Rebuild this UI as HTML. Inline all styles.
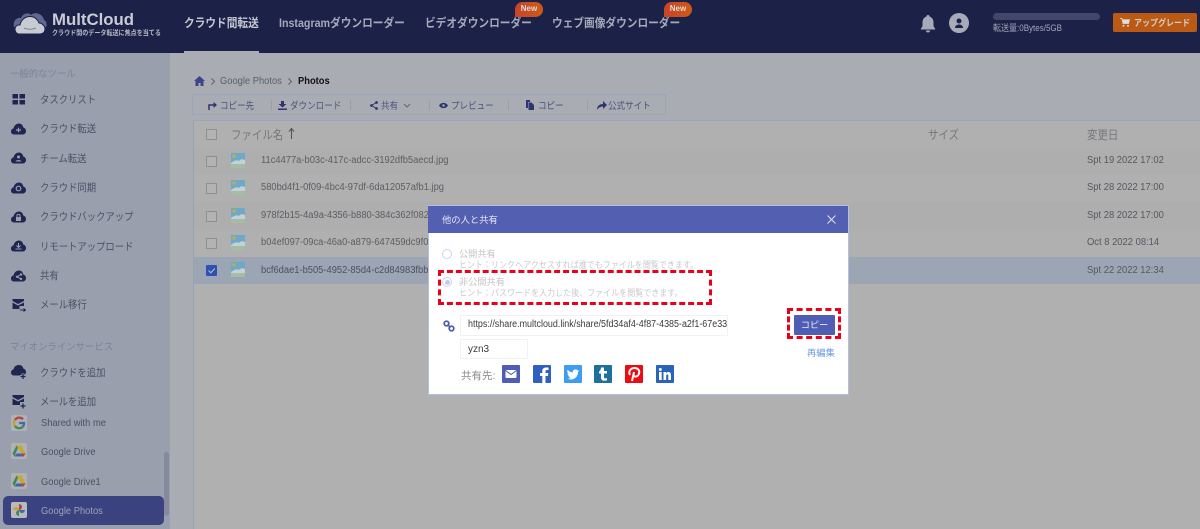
<!DOCTYPE html>
<html><head><meta charset="utf-8">
<style>
html,body{margin:0;padding:0;width:1200px;height:529px;overflow:hidden;background:#a9acb2}
#w{position:absolute;left:0;top:0;width:1200px;height:529px;overflow:hidden;filter:blur(.35px)}
body{position:relative;font-family:"Liberation Sans","Noto Sans CJK JP",sans-serif;font-size:11px;color:#5d6270}
.a{position:absolute;white-space:nowrap}
svg{display:block;overflow:visible}
.sx{transform:scaleX(.89);transform-origin:0 50%}
.nav{font-size:12px;font-weight:bold;color:#a5a9b8;top:14px;line-height:18px}
.side{color:#4b5064;font-size:10.5px;left:40px;transform:scaleX(.89);transform-origin:0 50%}
.ic{position:absolute;left:11px}
.cb{position:absolute;left:206px;width:9px;height:9px;border:1px solid #8f8f8f;background:#b3b3b3}
.thumb{position:absolute;left:231px;width:14px;height:15px}
.fn{position:absolute;left:261px;color:#5c5e64;font-size:10px;white-space:nowrap;transform:scaleX(.935);transform-origin:0 50%}
.dt{position:absolute;left:1087px;color:#55585f;font-size:10px;white-space:nowrap;transform:scaleX(.94);transform-origin:0 50%}
.tb{position:absolute;top:98px;color:#4a5080;font-size:9.5px;white-space:nowrap;transform:scaleX(.9);transform-origin:0 50%}
.sep{position:absolute;top:100px;width:1px;height:10px;background:#979daf}
.new{position:absolute;top:2px;width:28px;height:15px;background:linear-gradient(90deg,#c8432a,#cf5a14);border-radius:9px 9px 9px 0;color:#ddd;font-size:8px;font-weight:bold;text-align:center;line-height:14px}
.soc{position:absolute;top:365px;width:18px;height:18px;border-radius:1px}
.hd{font-size:12px;color:#75777d;top:126px;transform:scaleX(.87);transform-origin:0 50%}
.hint{left:459px;font-size:9px;color:#c9c9c9;transform:scaleX(.89);transform-origin:0 50%}
.rd{left:459px;font-size:9.2px;color:#c4c4c4}
</style></head><body><div id="w">

<!-- header -->
<div class="a" style="left:0;top:0;width:1200px;height:53px;background:#1c2148"></div>
<svg class="a" style="left:13px;top:12px" width="34" height="23" viewBox="0 0 34 23"><path d="M1 15C-.5 9 4 5 8 6 10 1 16 0 18 3 22-1 30 2 31 8 34 9 34 14 33 15Z" fill="#5f6690"/><path d="M6 22C2.500 22 2 18 2 17 2 14 5 12.500 7 13 8 8 12 4.500 17 4.500 22 4.500 25 8 26 11 29 11 32 14 32 17 32 20 30 22 27 22Z" fill="#c8cbd3" stroke="#1c2148" stroke-width="1"/><path d="M11 16Q17 18.500 23 16" stroke="#777" fill="none" stroke-width=".8"/></svg>
<div class="a" style="left:52px;top:10px;font-size:16.800px;font-weight:bold;color:#c9ccd3">MultCloud</div>
<div class="a sx" style="left:52px;top:27px;font-size:6.800px;color:#b6b9c5;font-weight:bold">クラウド間のデータ転送に焦点を当てる</div>
<div class="a nav sx" style="left:184px;color:#c3c6cf">クラウド間転送</div>
<div class="a" style="left:184px;top:51px;width:75px;height:2px;background:#a9acb2"></div>
<div class="a nav sx" style="left:279px">Instagramダウンローダー</div>
<div class="a nav sx" style="left:425px">ビデオダウンローダー</div>
<div class="a nav sx" style="left:552px">ウェブ画像ダウンローダー</div>
<div class="new" style="left:515px">New</div>
<div class="new" style="left:664px">New</div>
<svg class="a" style="left:920px;top:15px" width="16" height="18" viewBox="0 0 16 18"><path d="M8 0C9 0 9.500 .6 9.500 1.500 12 2.300 13.500 4.500 13.500 7.500L13.500 11 15.500 14.500.5 14.500 2.500 11 2.500 7.500C2.500 4.500 4 2.300 6.500 1.500 6.500.6 7 0 8 0Z M5.800 15.500H10.200C10 17 9 17.500 8 17.500 7 17.500 6 17 5.800 15.500Z" fill="#a7abb9"/></svg>
<svg class="a" style="left:949px;top:13px" width="20" height="20" viewBox="0 0 20 20"><circle cx="10" cy="10" r="10" fill="#a7abb9"/><circle cx="10" cy="8" r="2.500" fill="#1c2148"/><path d="M6 15C6 12.500 8 11.500 10 11.500 12 11.500 14 12.500 14 15Z" fill="#1c2148"/></svg>
<div class="a" style="left:993px;top:13px;width:107px;height:7px;border-radius:4px;background:#41466a"></div>
<div class="a sx" style="left:993px;top:21px;font-size:9px;color:#a3a7b6">転送量:0Bytes/5GB</div>
<div class="a" style="left:1113px;top:13px;width:84px;height:19px;border-radius:2px;background:#bb5a14"></div>
<svg class="a" style="left:1120px;top:18px" width="10" height="9" viewBox="0 0 10 9"><path d="M0 .5H2L3 5.500H8.500L9.500 1.800H2.500" stroke="#ddd" fill="#ddd" stroke-width=".8"/><circle cx="3.500" cy="7.800" r="1" fill="#ddd"/><circle cx="8" cy="7.800" r="1" fill="#ddd"/></svg>
<div class="a sx" style="left:1134px;top:16px;font-size:9px;font-weight:bold;color:#d5cfc8">アップグレード</div>

<!-- sidebar -->
<div class="a" style="left:0;top:53px;width:170px;height:476px;background:#9a9fae"></div>
<div class="a" style="left:10px;top:66px;font-size:9.400px;color:#7c8299">一般的なツール</div>
<svg class="ic" style="top:94px" width="15" height="11" viewBox="0 0 15 11" fill="#1f2650"><rect x="1.500" width="5.500" height="4.500"/><rect x="8.500" width="5.500" height="4.500"/><rect x="1.500" y="6" width="5.500" height="4.500"/><rect x="8.500" y="6" width="5.500" height="4.500"/></svg>
<div class="a side" style="top:92px">タスクリスト</div>
<svg class="ic" style="top:123px" width="15" height="12" viewBox="0 0 15 12"><path d="M3 11.500C1 11.500 0 10 0 8.500 0 7 1 5.500 2.500 5.500 3 2.500 5.500 .5 8 .5 10.500.5 12 2.500 12.300 4.500 14 5 15 6.500 15 8 15 10 13.500 11.500 12 11.500Z" fill="#1f2650"/><path d="M5 7H10M7.500 4.700V9.300" stroke="#9a9fae" stroke-width="1.300"/></svg>
<div class="a side" style="top:121px">クラウド転送</div>
<svg class="ic" style="top:152px" width="15" height="12" viewBox="0 0 15 12"><path d="M3 11.500C1 11.500 0 10 0 8.500 0 7 1 5.500 2.500 5.500 3 2.500 5.500 .5 8 .5 10.500.5 12 2.500 12.300 4.500 14 5 15 6.500 15 8 15 10 13.500 11.500 12 11.500Z" fill="#1f2650"/><circle cx="7.500" cy="5" r="1.500" fill="#9a9fae"/><path d="M4.500 9.500C5 7.500 10 7.500 10.500 9.500Z" fill="#9a9fae"/></svg>
<div class="a side" style="top:151px">チーム転送</div>
<svg class="ic" style="top:182px" width="15" height="12" viewBox="0 0 15 12"><path d="M3 11.500C1 11.500 0 10 0 8.500 0 7 1 5.500 2.500 5.500 3 2.500 5.500 .5 8 .5 10.500.5 12 2.500 12.300 4.500 14 5 15 6.500 15 8 15 10 13.500 11.500 12 11.500Z" fill="#1f2650"/><circle cx="7.500" cy="6.500" r="2.300" fill="none" stroke="#9a9fae" stroke-width="1.200"/></svg>
<div class="a side" style="top:180px">クラウド同期</div>
<svg class="ic" style="top:211px" width="15" height="12" viewBox="0 0 15 12"><path d="M3 11.500C1 11.500 0 10 0 8.500 0 7 1 5.500 2.500 5.500 3 2.500 5.500 .5 8 .5 10.500.5 12 2.500 12.300 4.500 14 5 15 6.500 15 8 15 10 13.500 11.500 12 11.500Z" fill="#1f2650"/><rect x="5" y="6" width="5" height="4" fill="#9a9fae"/><path d="M6 6V4.500C6 3 9 3 9 4.500V6" stroke="#9a9fae" fill="none"/></svg>
<div class="a side" style="top:209px">クラウドバックアップ</div>
<svg class="ic" style="top:240px" width="15" height="12" viewBox="0 0 15 12"><path d="M3 11.500C1 11.500 0 10 0 8.500 0 7 1 5.500 2.500 5.500 3 2.500 5.500 .5 8 .5 10.500.5 12 2.500 12.300 4.500 14 5 15 6.500 15 8 15 10 13.500 11.500 12 11.500Z" fill="#1f2650"/><path d="M7.500 3V7M5.500 5.500L7.500 7.500 9.500 5.500M4.500 9H10.500" stroke="#9a9fae" stroke-width="1.100" fill="none"/></svg>
<div class="a side" style="top:239px">リモートアップロード</div>
<svg class="ic" style="top:270px" width="15" height="12" viewBox="0 0 15 12"><path d="M3 11.500C1 11.500 0 10 0 8.500 0 7 1 5.500 2.500 5.500 3 2.500 5.500 .5 8 .5 10.500.5 12 2.500 12.300 4.500 14 5 15 6.500 15 8 15 10 13.500 11.500 12 11.500Z" fill="#1f2650"/><path d="M10 4.500L6 6.800 10 9" stroke="#9a9fae" fill="none"/><circle cx="10" cy="4.500" r="1.200" fill="#9a9fae"/><circle cx="6" cy="6.800" r="1.200" fill="#9a9fae"/><circle cx="10" cy="9" r="1.200" fill="#9a9fae"/></svg>
<div class="a side" style="top:268px">共有</div>
<svg class="ic" style="top:299px" width="15" height="13" viewBox="0 0 15 13"><path d="M1.500 0H13V2L7 5 1.500 2ZM1.500 3.500L7 6.500 13 3.500V7H8.500V10H1.500Z" fill="#1f2650"/><path d="M9 11H14M12.500 9.500L14.500 11 12.500 12.500" stroke="#1f2650" fill="none"/></svg>
<div class="a side" style="top:297px">メール移行</div>
<div class="a" style="left:10px;top:339px;font-size:9.400px;color:#7c8299">マイオンラインサービス</div>
<svg class="ic" style="top:365px" width="16" height="14" viewBox="0 0 16 14"><path d="M3 10.500C1 10.500 0 9 0 7.500 0 6 1 4.500 2.500 4.500 3 1.500 5.500 0 8 0 10.500 0 12 1.500 12.300 3.500 14 4 15 5.500 15 7 15 9 13.500 10.500 12 10.500Z" fill="#1f2650"/><path d="M9 11.500H15M12 8.500V14" stroke="#9a9fae" stroke-width="3"/><path d="M9.500 11.500H14.500M12 9V14" stroke="#1f2650" stroke-width="1.300"/></svg>
<div class="a side" style="top:365px">クラウドを追加</div>
<svg class="ic" style="top:395px" width="16" height="14" viewBox="0 0 16 14"><path d="M1.500 0H13V2L7 5 1.500 2ZM1.500 3.500L7 6.500 13 3.500V7H9V10H1.500Z" fill="#1f2650"/><path d="M9.500 11H14.500M12 8.500V13.500" stroke="#1f2650" stroke-width="1.300"/></svg>
<div class="a side" style="top:394px">メールを追加</div>

<svg class="a" style="left:11px;top:415px" width="16" height="16" viewBox="0 0 16 16"><rect width="16" height="16" rx="2" fill="#b0b1b6"/><g fill="none" stroke-width="2.200"><path d="M12 4.300A5 5 0 0 0 4 5" stroke="#b5443c"/><path d="M4 5A5 5 0 0 0 4 11" stroke="#c2a12c"/><path d="M4 11A5 5 0 0 0 12 11.500" stroke="#3f8a58"/><path d="M12 11.500A5 5 0 0 0 13 8H8.200" stroke="#3e69ad"/></g></svg>
<div class="a side" style="left:41px;top:417px">Shared with me</div>
<svg class="a" style="left:11px;top:443px" width="16" height="16" viewBox="0 0 16 16"><rect width="16" height="16" rx="2" fill="#b0b1b6"/><path d="M5.500 2.500H8L5 9.500 3.500 13.500 1.500 10.500Z" fill="#3b8a50"/><path d="M5.500 2.500H10.500L14.500 10.500H10.500Z" fill="#c9a82e"/><path d="M5.500 10.500H14.500L12.500 13.500H3.500Z" fill="#3d66b0"/><path d="M12 10.500H14.500L12.500 13.500H10Z" fill="#b5443c"/></svg>
<div class="a side" style="left:41px;top:446px">Google Drive</div>
<svg class="a" style="left:11px;top:473px" width="16" height="16" viewBox="0 0 16 16"><rect width="16" height="16" rx="2" fill="#b0b1b6"/><path d="M5.500 2.500H8L5 9.500 3.500 13.500 1.500 10.500Z" fill="#3b8a50"/><path d="M5.500 2.500H10.500L14.500 10.500H10.500Z" fill="#c9a82e"/><path d="M5.500 10.500H14.500L12.500 13.500H3.500Z" fill="#3d66b0"/><path d="M12 10.500H14.500L12.500 13.500H10Z" fill="#b5443c"/></svg>
<div class="a side" style="left:41px;top:476px">Google Drive1</div>
<div class="a" style="left:3px;top:496px;width:161px;height:29px;border-radius:5px;background:#3a4280"></div>
<svg class="a" style="left:11px;top:502px" width="16" height="16" viewBox="0 0 16 16"><rect width="16" height="16" rx="2" fill="#b9babe"/><path d="M8 8A3 3 0 0 0 2 8Z" fill="#c9a230"/><path d="M8 8A3 3 0 0 0 8 2Z" fill="#b5443c"/><path d="M8 8A3 3 0 0 0 14 8Z" fill="#3e69ad"/><path d="M8 8A3 3 0 0 0 8 14Z" fill="#3f8a58"/></svg>
<div class="a side" style="left:41px;top:505px;color:#9da2b4">Google Photos</div>
<div class="a" style="left:164px;top:452px;width:5px;height:64px;border-radius:3px;background:#858a9e"></div>

<!-- main -->
<div class="a" style="left:170px;top:53px;width:1030px;height:476px;background:#a9acb2"></div>
<svg class="a" style="left:194px;top:76px" width="11" height="10" viewBox="0 0 11 10"><path d="M5.500 0L11 5H9.500V10H6.500V7H4.500V10H1.500V5H0Z" fill="#3d4685"/></svg>
<svg class="a" style="left:211px;top:78px" width="4" height="7" viewBox="0 0 4 7"><path d="M.5.5L3.500 3.500 .5 6.500" stroke="#5c6068" fill="none"/></svg>
<div class="a sx" style="left:220px;top:75px;font-size:10.500px;color:#5b6068">Google Photos</div>
<svg class="a" style="left:288px;top:78px" width="4" height="7" viewBox="0 0 4 7"><path d="M.5.5L3.500 3.500 .5 6.500" stroke="#5c6068" fill="none"/></svg>
<div class="a sx" style="left:298px;top:75px;font-size:10.500px;font-weight:bold;color:#111">Photos</div>

<div class="a" style="left:192px;top:94px;width:472px;height:19px;border:1px solid #98a6bc;background:#a9acb2"></div>
<svg class="a" style="left:208px;top:101px" width="9" height="9" viewBox="0 0 9 9"><path d="M1 9V4H6" stroke="#2c3570" fill="none" stroke-width="1.500"/><path d="M5.500 1L9 4 5.500 7Z" fill="#2c3570"/></svg>
<div class="tb" style="left:220px">コピー先</div><div class="sep" style="left:271px"></div>
<svg class="a" style="left:278px;top:101px" width="9" height="9" viewBox="0 0 9 9"><path d="M3 0H6V3H8.500L4.500 6.500.5 3H3ZM0 7.500H9V9H0Z" fill="#2c3570"/></svg>
<div class="tb" style="left:290px">ダウンロード</div><div class="sep" style="left:350px"></div>
<svg class="a" style="left:370px;top:101px" width="8" height="9" viewBox="0 0 8 9"><path d="M6.500 1.500L1.500 4.500 6.500 7.500" stroke="#2c3570" fill="none"/><circle cx="6.500" cy="1.500" r="1.400" fill="#2c3570"/><circle cx="1.500" cy="4.500" r="1.400" fill="#2c3570"/><circle cx="6.500" cy="7.500" r="1.400" fill="#2c3570"/></svg>
<div class="tb" style="left:381px">共有</div>
<svg class="a" style="left:403px;top:103px" width="8" height="5" viewBox="0 0 8 5"><path d="M1 1L4 4 7 1" stroke="#5f6683" fill="none"/></svg>
<div class="sep" style="left:429px"></div>
<svg class="a" style="left:439px;top:102px" width="9" height="7" viewBox="0 0 9 7"><path d="M0 3.500C2 0 7 0 9 3.500 7 7 2 7 0 3.500Z" fill="#2c3570"/><circle cx="4.500" cy="3.500" r="1.200" fill="#a9acb2"/></svg>
<div class="tb" style="left:451px">プレビュー</div><div class="sep" style="left:508px"></div>
<svg class="a" style="left:526px;top:100px" width="8" height="10" viewBox="0 0 8 10"><path d="M0 0H4V2H2V8H0ZM2.500 2.500H5.500L8 5V10H2.500Z" fill="#2c3570"/></svg>
<div class="tb" style="left:538px">コピー</div><div class="sep" style="left:587px"></div>
<svg class="a" style="left:597px;top:101px" width="10" height="9" viewBox="0 0 10 9"><path d="M0 9C0 5 2.500 3 6 3V0L10 4 6 8V5.500C3.500 5.500 1.500 6.500 0 9Z" fill="#2c3570"/></svg>
<div class="tb" style="left:608px">公式サイト</div>

<div class="a" style="left:193px;top:120px;width:1007px;height:409px;background:#b0b0b0;border-left:1px solid #98a2b6;border-top:1px solid #98a6bc"></div>
<div class="a" style="left:194px;top:148px;width:1006px;height:26px;background:#aeaeae"></div>
<div class="a" style="left:194px;top:202px;width:1006px;height:27px;background:#aeaeae"></div>
<div class="a" style="left:194px;top:257px;width:1006px;height:27px;background:#9ba5b4"></div>

<div class="cb" style="top:129px"></div>
<div class="a hd" style="left:231px">ファイル名</div>
<svg class="a" style="left:288px;top:128px" width="7" height="11" viewBox="0 0 7 11"><path d="M3.500 1V11M1 3.500L3.500 .5 6 3.500" stroke="#53565f" fill="none" stroke-width="1.100"/></svg>
<div class="a hd" style="left:928px">サイズ</div>
<div class="a hd" style="left:1087px">変更日</div>

<div class="cb" style="top:156px"></div>
<div class="cb" style="top:183px"></div>
<div class="cb" style="top:211px"></div>
<div class="cb" style="top:238px"></div>
<div class="a" style="left:206px;top:265px;width:11px;height:11px;background:#2f50b4;border-radius:1px"></div>
<svg class="a" style="left:206px;top:265px" width="11" height="11" viewBox="0 0 11 11"><path d="M2.500 5.500L4.800 7.800 8.800 3.500" stroke="#b3bbcc" stroke-width="1.100" fill="none"/></svg>

<svg class="thumb" style="top:153px" viewBox="0 0 14 15"><rect width="14" height="15" fill="#6fa9c8"/><rect y="11" width="14" height="4" fill="#a5bda5"/><path d="M0 10Q5 6 8 8 10 5 14 7V11H0Z" fill="#c4d2d6"/><circle cx="3" cy="3" r="1.700" fill="#c9a94a"/></svg>
<svg class="thumb" style="top:180px" viewBox="0 0 14 15"><rect width="14" height="15" fill="#6fa9c8"/><rect y="11" width="14" height="4" fill="#a5bda5"/><path d="M0 10Q5 6 8 8 10 5 14 7V11H0Z" fill="#c4d2d6"/><circle cx="3" cy="3" r="1.700" fill="#c9a94a"/></svg>
<svg class="thumb" style="top:208px" viewBox="0 0 14 15"><rect width="14" height="15" fill="#6fa9c8"/><rect y="11" width="14" height="4" fill="#a5bda5"/><path d="M0 10Q5 6 8 8 10 5 14 7V11H0Z" fill="#c4d2d6"/><circle cx="3" cy="3" r="1.700" fill="#c9a94a"/></svg>
<svg class="thumb" style="top:235px" viewBox="0 0 14 15"><rect width="14" height="15" fill="#6fa9c8"/><rect y="11" width="14" height="4" fill="#a5bda5"/><path d="M0 10Q5 6 8 8 10 5 14 7V11H0Z" fill="#c4d2d6"/><circle cx="3" cy="3" r="1.700" fill="#c9a94a"/></svg>
<svg class="thumb" style="top:262px" viewBox="0 0 14 15"><rect width="14" height="15" fill="#6fa9c8"/><rect y="11" width="14" height="4" fill="#a5bda5"/><path d="M0 10Q5 6 8 8 10 5 14 7V11H0Z" fill="#c4d2d6"/><circle cx="3" cy="3" r="1.700" fill="#c9a94a"/></svg>

<div class="fn" style="top:155px">11c4477a-b03c-417c-adcc-3192dfb5aecd.jpg</div>
<div class="fn" style="top:182px">580bd4f1-0f09-4bc4-97df-6da12057afb1.jpg</div>
<div class="fn" style="top:210px">978f2b15-4a9a-4356-b880-384c362f082</div>
<div class="fn" style="top:237px">b04ef097-09ca-46a0-a879-647459dc9f0</div>
<div class="fn" style="top:265px;color:#4d5160">bcf6dae1-b505-4952-85d4-c2d84983fbb</div>
<div class="dt" style="top:155px">Spt 19 2022 17:02</div>
<div class="dt" style="top:182px">Spt 28 2022 17:00</div>
<div class="dt" style="top:210px">Spt 28 2022 17:00</div>
<div class="dt" style="top:237px">Oct 8 2022 08:14</div>
<div class="dt" style="top:265px">Spt 22 2022 12:34</div>

<!-- modal -->
<div class="a" style="left:428px;top:205px;width:421px;height:190px;background:#fff;border:1px solid #b5bfe0;box-sizing:border-box"></div>
<div class="a" style="left:428px;top:206px;width:420px;height:27px;background:#535fb0"></div>
<div class="a" style="left:442px;top:212px;font-size:9.300px;color:#e6e8f4">他の人と共有</div>
<svg class="a" style="left:827px;top:215px" width="9" height="9" viewBox="0 0 9 9"><path d="M.5.5L8.500 8.500M8.500.5L.5 8.500" stroke="#e2e4f3" stroke-width="1"/></svg>

<div class="a" style="left:442px;top:249px;width:8px;height:8px;border:1px solid #ccd3ee;border-radius:50%"></div>
<div class="a rd" style="top:246px">公開共有</div>
<div class="a hint" style="top:258px">ヒント：リンクへアクセスすれば誰でもファイルを閲覧できます。</div>
<div class="a" style="left:442px;top:277px;width:8px;height:8px;border:1px solid #ccd3ee;border-radius:50%"></div>
<div class="a" style="left:444.500px;top:279.500px;width:5px;height:5px;background:#c3cbec;border-radius:50%"></div>
<div class="a rd" style="top:274px">非公開共有</div>
<div class="a hint" style="top:286px">ヒント：パスワードを入力した後、ファイルを閲覧できます。</div>
<div class="a" style="left:438px;top:270px;width:268px;height:29px;border:3px dashed #e8001c"></div>

<svg class="a" style="left:443px;top:320px" width="12" height="12" viewBox="0 0 12 12"><circle cx="3.500" cy="3.500" r="2.300" fill="none" stroke="#4b58ab" stroke-width="1.700"/><circle cx="8.500" cy="8.500" r="2.300" fill="none" stroke="#4b58ab" stroke-width="1.700"/><path d="M4.500 4.500L7.500 7.500" stroke="#4b58ab" stroke-width="1.500"/></svg>
<div class="a" style="left:460px;top:315px;width:266px;height:19px;border:1px solid #f0f2fa"></div>
<div class="a" style="left:468px;top:319px;font-size:10px;color:#3a3a3a;transform:scaleX(.893);transform-origin:0 50%">https://share.multcloud.link/share/5fd34af4-4f87-4385-a2f1-67e33</div>
<div class="a" style="left:460px;top:339px;width:66px;height:18px;border:1px solid #f0f2fa;font-size:10px;line-height:19px;color:#3a3a3a;text-indent:7px">yzn3</div>
<div class="a" style="left:461px;top:368px;font-size:10.500px;color:#8a8a8a">共有先:</div>

<svg class="soc" style="left:502px" viewBox="0 0 18 18"><rect width="18" height="18" rx="1" fill="#4f5db5"/><rect x="3.500" y="5" width="11" height="8" rx="1" fill="#fff"/><path d="M3.500 5.500L9 9.500 14.500 5.500" stroke="#4f5db5" fill="none"/></svg>
<svg class="soc" style="left:533px" viewBox="0 0 18 18"><rect width="18" height="18" rx="1" fill="#2f5fc0"/><path d="M12.500 18V11H15L15.300 8H12.500V6.500C12.500 5.500 13 5 14 5H15.500V2.500H13C10.500 2.500 9.300 4 9.300 6V8H7V11H9.300V18Z" fill="#fff"/></svg>
<svg class="soc" style="left:564px" viewBox="0 0 18 18"><rect width="18" height="18" rx="1" fill="#3c9df2"/><path d="M3 13.500C7.500 16 14 13.500 14 7L15.500 5.500 13.800 5.800C13 3.800 10 4 9 5.800 8.700 6.500 8.800 7 8.800 7.500 6.500 7.300 4.800 6.300 3.500 4.800 3 6.300 3.300 7.800 4.500 8.800L3.500 8.500C3.500 10 4.500 11 5.800 11.300H4.500C5 12.300 6 13 7 13 5.800 13.500 4.500 13.800 3 13.500Z" fill="#fff"/></svg>
<svg class="soc" style="left:594px" viewBox="0 0 18 18"><rect width="18" height="18" rx="1" fill="#1e6f9b"/><path d="M7 2.500H10V6H13V8.500H10V12C10 13.500 11.500 13.800 13 13V15.300C10 16.500 7 15.500 7 12.500V8.500H5V6.500C6 6 7 4.500 7 2.500Z" fill="#fff"/></svg>
<svg class="soc" style="left:625px" viewBox="0 0 18 18"><rect width="18" height="18" rx="1" fill="#ee0a12"/><path d="M7 16L9 7M5 10C3 6 6 3 9.500 3 13 3 15 5.500 14 8.500 13 12 9.500 12.500 8.500 10" stroke="#fff" stroke-width="2" fill="none"/></svg>
<svg class="soc" style="left:656px" viewBox="0 0 18 18"><rect width="18" height="18" rx="1" fill="#2a63b8"/><rect x="3" y="7" width="2.700" height="8" fill="#fff"/><circle cx="4.300" cy="4.500" r="1.500" fill="#fff"/><path d="M7.500 7H10V8.200C11 6.500 15 6.300 15 10V15H12.300V10.800C12.300 8.800 10.200 9 10.200 10.800V15H7.500Z" fill="#fff"/></svg>

<div class="a" style="left:787px;top:308px;width:48px;height:25px;border:3px dashed #e8001c"></div>
<div class="a" style="left:794px;top:315px;width:41px;height:20px;background:#4f5db5;border-radius:1px;color:#e8eaf5;font-size:9.200px;text-align:center;line-height:20px">コピー</div>
<div class="a" style="left:807px;top:345px;font-size:9.300px;color:#6f9ae0">再編集</div>

</div></body></html>
